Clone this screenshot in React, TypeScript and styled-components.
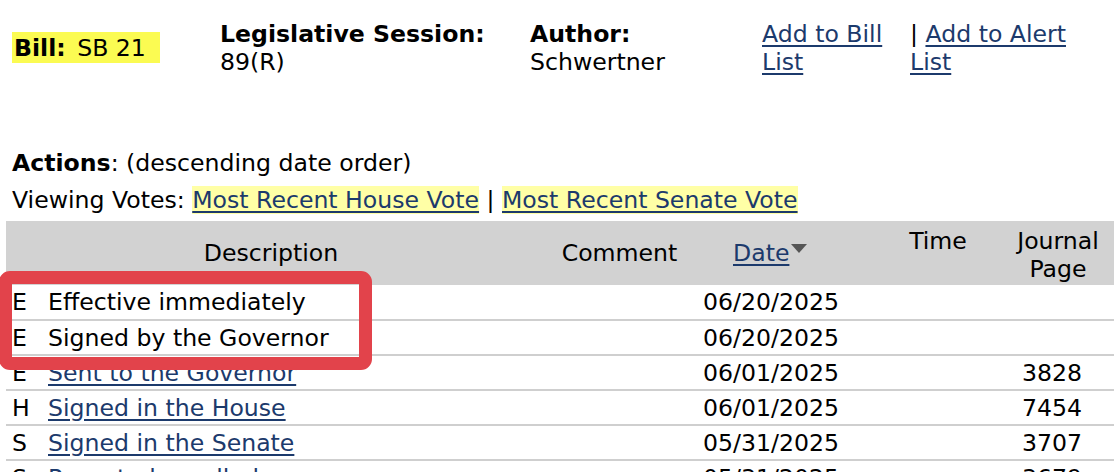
import { createGlobalStyle, styled } from "styled-components";

const GlobalStyle = createGlobalStyle`
  html, body {
    margin: 0;
    padding: 0;
    background: #ffffff;
  }
  body {
    font-family: "DejaVu Sans", Verdana, sans-serif;
    font-size: 23.6px;
    color: #000000;
    overflow: hidden;
  }
`;

type Action = {
  chamber: string;
  description: string;
  linked: boolean;
  date: string;
  page: string;
};

const actions: Action[] = [
  { chamber: "E", description: "Effective immediately", linked: false, date: "06/20/2025", page: "" },
  { chamber: "E", description: "Signed by the Governor", linked: false, date: "06/20/2025", page: "" },
  { chamber: "E", description: "Sent to the Governor", linked: true, date: "06/01/2025", page: "3828" },
  { chamber: "H", description: "Signed in the House", linked: true, date: "06/01/2025", page: "7454" },
  { chamber: "S", description: "Signed in the Senate", linked: true, date: "05/31/2025", page: "3707" },
  { chamber: "S", description: "Reported enrolled", linked: true, date: "05/31/2025", page: "3679" },
];

const App = () => {
  return (
    <>
      <GlobalStyle />
      <Page>
        <BillHeader>
          <BillBadge>
            <b>Bill:</b> SB 21
          </BillBadge>
          <Field width="310px">
            <Label>Legislative Session:</Label>
            <span>89(R)</span>
          </Field>
          <Field width="232px">
            <Label>Author:</Label>
            <span>Schwertner</span>
          </Field>
          <Field width="148px">
            <Link href="#">Add to Bill List</Link>
          </Field>
          <Field width="180px">
            <span>
              | <Link href="#">Add to Alert List</Link>
            </span>
          </Field>
        </BillHeader>

        <ActionsTitle>
          <b>Actions</b>: (descending date order)
        </ActionsTitle>
        <VotesLine>
          Viewing Votes: <VoteLink href="#">Most Recent House Vote</VoteLink> |{" "}
          <VoteLink href="#">Most Recent Senate Vote</VoteLink>
        </VotesLine>

        <TableWrap>
          <ActionsTable>
            <colgroup>
              <col style={{ width: 36 }} />
              <col style={{ width: 494 }} />
              <col style={{ width: 167 }} />
              <col style={{ width: 180 }} />
              <col style={{ width: 110 }} />
              <col style={{ width: 130 }} />
            </colgroup>
            <thead>
              <tr>
                <HeadCell colSpan={2} align="center">
                  Description
                </HeadCell>
                <HeadCell align="center">Comment</HeadCell>
                <HeadCell align="left" indent="30px">
                  <Link href="#">Date</Link>
                  <SortArrow />
                </HeadCell>
                <HeadCell align="center" top>
                  Time
                </HeadCell>
                <HeadCell align="center" top>
                  Journal
                  <br />
                  Page
                </HeadCell>
              </tr>
            </thead>
            <tbody>
              {actions.map((a, i) => (
                <Row key={i}>
                  <Cell indent="6px">{a.chamber}</Cell>
                  <Cell indent="6px">
                    {a.linked ? <Link href="#">{a.description}</Link> : a.description}
                  </Cell>
                  <Cell />
                  <Cell>{a.date}</Cell>
                  <Cell />
                  <Cell align="right" indent="41px">
                    {a.page}
                  </Cell>
                </Row>
              ))}
            </tbody>
          </ActionsTable>
          <Highlight />
        </TableWrap>
      </Page>
    </>
  );
};

const Page = styled.div`
  padding: 0 0 0 6px;
  width: 1200px;
`;

const BillHeader = styled.div`
  display: flex;
  align-items: flex-start;
  padding-top: 20px;
  line-height: 28px;
`;

const BillBadge = styled.div`
  background: #fbfb52;
  margin: 12px 60px 0 6px;
  padding: 2px 0 1px 2px;
  width: 146px;
  line-height: 28px;

  b {
    margin-right: 4px;
  }
`;

const Field = styled.div<{ width: string }>`
  width: ${(p) => p.width};
  display: flex;
  flex-direction: column;
`;

const Label = styled.span`
  font-weight: bold;
`;

const Link = styled.a`
  color: #1c3a6c;
  text-decoration: underline;
  text-underline-offset: 3px;
`;

const ActionsTitle = styled.div`
  margin: 74px 0 0 6px;
  line-height: 26px;
`;

const VotesLine = styled.div`
  margin: 11px 0 0 6px;
  line-height: 26px;
`;

const VoteLink = styled(Link)`
  background: #ffffa6;
`;

const TableWrap = styled.div`
  position: relative;
  margin-top: 8px;
`;

const ActionsTable = styled.table`
  border-collapse: collapse;
  table-layout: fixed;
  width: 1117px;
`;

const HeadCell = styled.th<{ align: string; indent?: string; top?: boolean }>`
  background: #d2d2d2;
  font-weight: normal;
  height: 64px;
  padding: ${(p) => (p.top ? "6px" : "0")} 0 0 ${(p) => p.indent ?? "0"};
  text-align: ${(p) => p.align};
  vertical-align: ${(p) => (p.top ? "top" : "middle")};
  line-height: 28px;
  box-sizing: border-box;
`;

const SortArrow = styled.span`
  display: inline-block;
  width: 0;
  height: 0;
  margin-left: 2px;
  vertical-align: 8px;
  border-left: 8px solid transparent;
  border-right: 8px solid transparent;
  border-top: 9px solid #555555;
`;

const Row = styled.tr`
  height: 35px;
  border-bottom: 2px solid #cfcfcf;
`;

const Cell = styled.td<{ align?: string; indent?: string }>`
  padding: 0 ${(p) => (p.align === "right" ? p.indent : "0")} 0
    ${(p) => (p.align === "right" ? "0" : p.indent ?? "0")};
  text-align: ${(p) => p.align ?? "left"};
  line-height: 26px;
  white-space: nowrap;
`;

const Highlight = styled.div`
  position: absolute;
  left: -7px;
  top: 50px;
  width: 347px;
  height: 73px;
  border: 13px solid #e2434b;
  border-radius: 11px;
`;

export default App;
